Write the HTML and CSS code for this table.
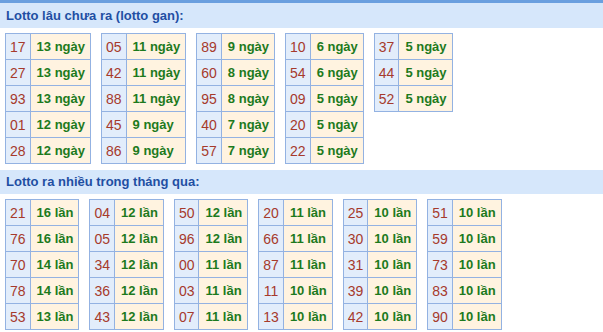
FILE: index.html
```html
<!DOCTYPE html>
<html>
<head>
<meta charset="utf-8">
<link rel="stylesheet" href="styles.css">
</head>
<body>
<div class="topline"></div>
<div class="band">Lotto lâu chưa ra (lotto gan):</div>
<div class="group">
  <table class="t">
    <tr><td class="n">17</td><td class="v">13 ngày</td></tr>
    <tr><td class="n">27</td><td class="v">13 ngày</td></tr>
    <tr><td class="n">93</td><td class="v">13 ngày</td></tr>
    <tr><td class="n">01</td><td class="v">12 ngày</td></tr>
    <tr><td class="n">28</td><td class="v">12 ngày</td></tr>
  </table>
  <table class="t">
    <tr><td class="n">05</td><td class="v">11 ngày</td></tr>
    <tr><td class="n">42</td><td class="v">11 ngày</td></tr>
    <tr><td class="n">88</td><td class="v">11 ngày</td></tr>
    <tr><td class="n">45</td><td class="v">9 ngày</td></tr>
    <tr><td class="n">86</td><td class="v">9 ngày</td></tr>
  </table>
  <table class="t">
    <tr><td class="n">89</td><td class="v">9 ngày</td></tr>
    <tr><td class="n">60</td><td class="v">8 ngày</td></tr>
    <tr><td class="n">95</td><td class="v">8 ngày</td></tr>
    <tr><td class="n">40</td><td class="v">7 ngày</td></tr>
    <tr><td class="n">57</td><td class="v">7 ngày</td></tr>
  </table>
  <table class="t">
    <tr><td class="n">10</td><td class="v">6 ngày</td></tr>
    <tr><td class="n">54</td><td class="v">6 ngày</td></tr>
    <tr><td class="n">09</td><td class="v">5 ngày</td></tr>
    <tr><td class="n">20</td><td class="v">5 ngày</td></tr>
    <tr><td class="n">22</td><td class="v">5 ngày</td></tr>
  </table>
  <table class="t">
    <tr><td class="n">37</td><td class="v">5 ngày</td></tr>
    <tr><td class="n">44</td><td class="v">5 ngày</td></tr>
    <tr><td class="n">52</td><td class="v">5 ngày</td></tr>
  </table>
</div>
<div class="band band2">Lotto ra nhiều trong tháng qua:</div>
<div class="group">
  <table class="t">
    <tr><td class="n">21</td><td class="v">16 lần</td></tr>
    <tr><td class="n">76</td><td class="v">16 lần</td></tr>
    <tr><td class="n">70</td><td class="v">14 lần</td></tr>
    <tr><td class="n">78</td><td class="v">14 lần</td></tr>
    <tr><td class="n">53</td><td class="v">13 lần</td></tr>
  </table>
  <table class="t">
    <tr><td class="n">04</td><td class="v">12 lần</td></tr>
    <tr><td class="n">05</td><td class="v">12 lần</td></tr>
    <tr><td class="n">34</td><td class="v">12 lần</td></tr>
    <tr><td class="n">36</td><td class="v">12 lần</td></tr>
    <tr><td class="n">43</td><td class="v">12 lần</td></tr>
  </table>
  <table class="t">
    <tr><td class="n">50</td><td class="v">12 lần</td></tr>
    <tr><td class="n">96</td><td class="v">12 lần</td></tr>
    <tr><td class="n">00</td><td class="v">11 lần</td></tr>
    <tr><td class="n">03</td><td class="v">11 lần</td></tr>
    <tr><td class="n">07</td><td class="v">11 lần</td></tr>
  </table>
  <table class="t">
    <tr><td class="n">20</td><td class="v">11 lần</td></tr>
    <tr><td class="n">66</td><td class="v">11 lần</td></tr>
    <tr><td class="n">87</td><td class="v">11 lần</td></tr>
    <tr><td class="n">11</td><td class="v">10 lần</td></tr>
    <tr><td class="n">13</td><td class="v">10 lần</td></tr>
  </table>
  <table class="t">
    <tr><td class="n">25</td><td class="v">10 lần</td></tr>
    <tr><td class="n">30</td><td class="v">10 lần</td></tr>
    <tr><td class="n">31</td><td class="v">10 lần</td></tr>
    <tr><td class="n">39</td><td class="v">10 lần</td></tr>
    <tr><td class="n">42</td><td class="v">10 lần</td></tr>
  </table>
  <table class="t">
    <tr><td class="n">51</td><td class="v">10 lần</td></tr>
    <tr><td class="n">59</td><td class="v">10 lần</td></tr>
    <tr><td class="n">73</td><td class="v">10 lần</td></tr>
    <tr><td class="n">83</td><td class="v">10 lần</td></tr>
    <tr><td class="n">90</td><td class="v">10 lần</td></tr>
  </table>
</div>
</body>
</html>
```
FILE: styles.css
```css
html, body {
  margin: 0;
  padding: 0;
  background: #ffffff;
  font-family: "Liberation Sans", Arial, sans-serif;
  font-size: 13px;
}
.topline {
  height: 3px;
  background: #6a9fdf;
}
.band {
  height: 25px;
  line-height: 25px;
  background: #d6e7fb;
  color: #1f4fa3;
  font-weight: bold;
  font-size: 13px;
  padding-left: 6px;
}
.band2 {
  margin-top: 6px;
  height: 24px;
  line-height: 24px;
}
.group {
  display: flex;
  align-items: flex-start;
  gap: 10px;
  padding: 5px 0 0 5px;
}
.t {
  border-collapse: collapse;
}
.t tr {
  height: 26px;
}
.t td {
  border: 1px solid #93b2e2;
  padding: 0 5px;
  font-size: 13px;
  white-space: nowrap;
}
.t td.n {
  background: #e2edfb;
  color: #a63a2c;
  text-align: center;
  font-size: 14px;
  padding: 0 4px;
}
.t td.v {
  background: #fff3e0;
  color: #1d7a1d;
  font-weight: bold;
  padding: 0 5px 0 6px;
}
```
